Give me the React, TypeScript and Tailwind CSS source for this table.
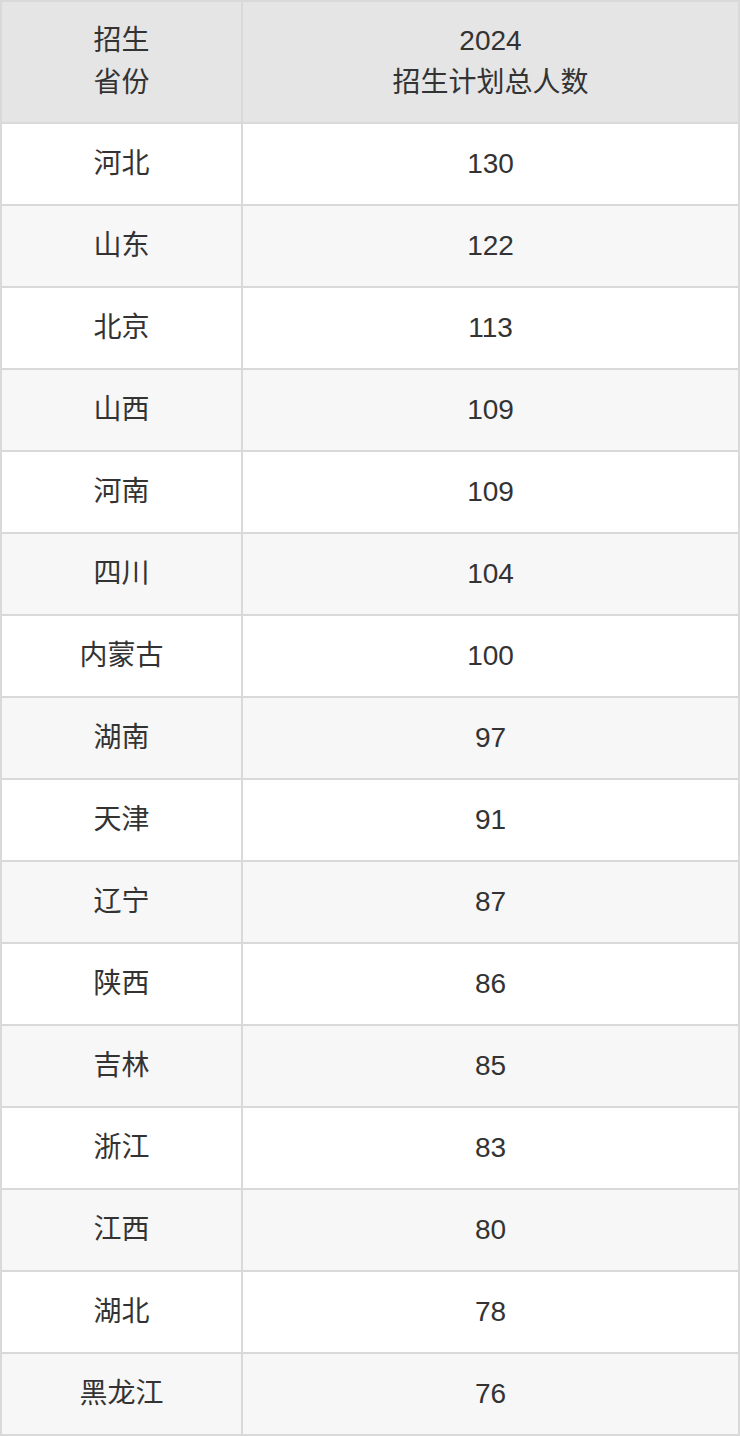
import React from "react";

const rows: [string, string][] = [
  ["河北", "130"],
  ["山东", "122"],
  ["北京", "113"],
  ["山西", "109"],
  ["河南", "109"],
  ["四川", "104"],
  ["内蒙古", "100"],
  ["湖南", "97"],
  ["天津", "91"],
  ["辽宁", "87"],
  ["陕西", "86"],
  ["吉林", "85"],
  ["浙江", "83"],
  ["江西", "80"],
  ["湖北", "78"],
  ["黑龙江", "76"],
];

export default function App() {
  return (
    <div
      className="w-[740px] text-[#333333] text-[28px] leading-[42px]"
      style={{ fontFamily: '"Liberation Sans", "Noto Sans CJK SC", sans-serif' }}
    >
      <div className="grid grid-cols-[239px_1fr] gap-[2px] bg-[#d9d9d9] p-[2px]">
        <div className="h-[120px] bg-[#e5e5e5] flex flex-col items-center justify-center text-center">
          <div>招生</div>
          <div>省份</div>
        </div>
        <div className="h-[120px] bg-[#e5e5e5] flex flex-col items-center justify-center text-center">
          <div>2024</div>
          <div>招生计划总人数</div>
        </div>
        {rows.map(([p, n], i) => {
          const bg = i % 2 === 0 ? "bg-white" : "bg-[#f7f7f7]";
          return (
            <React.Fragment key={p}>
              <div className={`h-[80px] ${bg} flex items-center justify-center`}>{p}</div>
              <div className={`h-[80px] ${bg} flex items-center justify-center`}>{n}</div>
            </React.Fragment>
          );
        })}
      </div>
    </div>
  );
}
